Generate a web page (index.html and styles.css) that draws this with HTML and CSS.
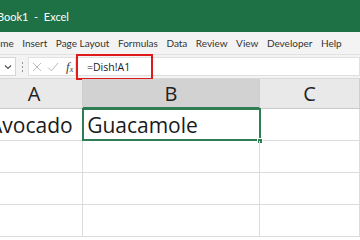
FILE: index.html
```html
<!DOCTYPE html>
<html>
<head>
<meta charset="utf-8">
<link rel="stylesheet" href="styles.css">
</head>
<body>
<div class="title"><span class="doc">Book1&nbsp; -&nbsp; Excel</span></div>
<div class="tabs">
  <span class="tab home">Home</span>
  <span class="tab">Insert</span>
  <span class="tab">Page Layout</span>
  <span class="tab">Formulas</span>
  <span class="tab">Data</span>
  <span class="tab">Review</span>
  <span class="tab">View</span>
  <span class="tab">Developer</span>
  <span class="tab">Help</span>
</div>
<div class="fbar">
  <div class="namebox">
    <svg width="8" height="6" viewBox="0 0 8 6"><path d="M1 1.5 L4 4.5 L7 1.5" fill="none" stroke="#555" stroke-width="1.2"/></svg>
  </div>
  <div class="dots"><i></i><i></i><i></i></div>
  <div class="btns">
    <svg width="10" height="10" viewBox="0 0 10 10"><path d="M1 1 L9 9 M9 1 L1 9" stroke="#bdbdbd" stroke-width="1"/></svg>
    <svg width="12" height="10" viewBox="0 0 12 10"><path d="M1 5.5 L4.5 9 L11 1" fill="none" stroke="#bdbdbd" stroke-width="1"/></svg>
    <span class="fx">f<sub>x</sub></span>
  </div>
  <div class="input"><span class="formula">=Dish!A1</span></div>
</div>
<div class="sheet">
  <div class="row head">
    <div class="cell ca">A</div>
    <div class="cell cb selh">B</div>
    <div class="cell cc">C</div>
  </div>
  <div class="row">
    <div class="cell ca">Avocado</div>
    <div class="cell cb sel">Guacamole<span class="handle"></span></div>
    <div class="cell cc"></div>
  </div>
  <div class="row">
    <div class="cell ca"></div>
    <div class="cell cb"></div>
    <div class="cell cc"></div>
  </div>
  <div class="row">
    <div class="cell ca"></div>
    <div class="cell cb"></div>
    <div class="cell cc"></div>
  </div>
  <div class="row">
    <div class="cell ca"></div>
    <div class="cell cb"></div>
    <div class="cell cc"></div>
  </div>
</div>
</body>
</html>
```
FILE: styles.css
```css
* { box-sizing: border-box; }
html, body { margin: 0; padding: 0; }
body {
  width: 360px;
  height: 240px;
  overflow: hidden;
  background: #fff;
  font-family: "Open Sans", "Noto Sans", sans-serif;
}
.title {
  height: 32px;
  background: #1e7145;
  display: flex;
  align-items: center;
  margin-left: -3px;
}
.doc {
  color: #fff;
  font-family: Lato, "Open Sans", sans-serif;
  font-size: 11px;
  margin-top: 1px;
}
.tabs {
  height: 22px;
  background: #f3f3f3;
  display: flex;
  align-items: center;
  gap: 8.5px;
  margin-left: -13px;
  font-family: Lato, "Open Sans", sans-serif;
  font-size: 10px;
  color: #333;
  white-space: nowrap;
}
.fbar {
  height: 24px;
  background: #f3f3f3;
  border-top: 1px solid #e1e1e1;
  display: flex;
  align-items: stretch;
  padding: 2px 0;
}
.namebox {
  width: 16px;
  display: flex;
  align-items: center;
  justify-content: flex-end;
  background: #fff;
  border: 1px solid #d6d6d6;
  border-left: none;
  padding-right: 3px;
}
.dots {
  width: 12px;
  display: flex;
  flex-direction: column;
  align-items: center;
  justify-content: center;
  gap: 2px;
}
.dots i {
  width: 1px;
  height: 2px;
  background: #999;
}
.btns {
  width: 48px;
  display: flex;
  align-items: center;
  gap: 5px;
  padding-left: 3px;
  background: #fff;
  border: 1px solid #e0e0e0;
}
.fx {
  font-family: "Liberation Serif", serif;
  font-style: italic;
  font-size: 13px;
  color: #444;
  margin-left: 2px;
}
.fx sub { font-size: 8px; vertical-align: -1px; }
.input {
  flex: 1;
  background: #fff;
  border: 1px solid #e0e0e0;
  display: flex;
  align-items: center;
}
.formula {
  display: flex;
  align-items: center;
  width: 77px;
  height: 26px;
  margin-left: -1px;
  border: 2px solid #e01a1a;
  padding-left: 9px;
  font-size: 10.5px;
  color: #222;
}
.sheet {
  margin-left: -14px;
}
.row {
  display: flex;
  height: 32px;
  border-bottom: 1px solid #dcdcdc;
}
.row.head {
  height: 31px;
  background: #e9e9e9;
  border-top: 1px solid #d8d8d8;
  border-bottom: 1px solid #c9c9c9;
}
.cell {
  border-right: 1px solid #dcdcdc;
  display: flex;
  align-items: center;
  font-size: 21px;
  color: #1a1a1a;
  padding-left: 3px;
  position: relative;
}
.head .cell {
  justify-content: center;
  padding-left: 0;
  font-size: 20px;
  color: #222;
  border-right-color: #cfcfcf;
}
.ca { width: 101px; }
.cb { width: 184px; }
.cc { width: 104px; }
.selh {
  background: #d2d2d2;
  border-bottom: 2px solid #2f7d53;
  margin-bottom: -1px;
  color: #1f6d43;
}
.sel {
  outline: 2px solid #2f7d53;
  outline-offset: -1px;
  padding-left: 4px;
}
.handle {
  position: absolute;
  right: -4px;
  bottom: -4px;
  width: 6px;
  height: 6px;
  background: #2f7d53;
  border: 1px solid #fff;
}
```
